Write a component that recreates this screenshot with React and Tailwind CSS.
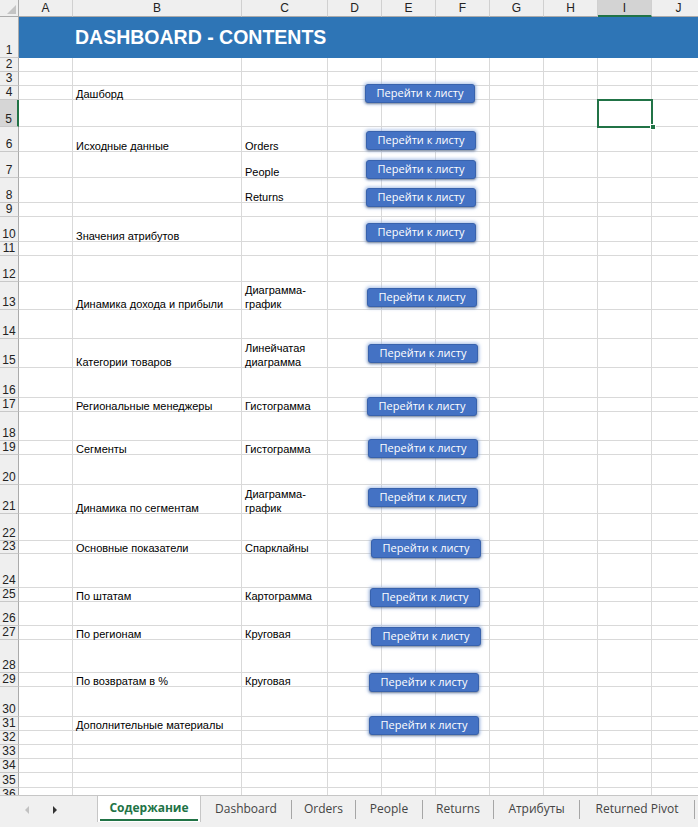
import React from "react";

const COLS = [
  ["A", 54],
  ["B", 169],
  ["C", 86],
  ["D", 54],
  ["E", 54],
  ["F", 54],
  ["G", 54],
  ["H", 54],
  ["I", 54],
  ["J", 54],
];

const ROWS = [
  { n: 2, h: 14 },
  { n: 3, h: 14 },
  { n: 4, h: 14, b: "Дашборд" },
  { n: 5, h: 27 },
  { n: 6, h: 25, b: "Исходные данные", c: "Orders" },
  { n: 7, h: 26, c: "People" },
  { n: 8, h: 25, c: "Returns" },
  { n: 9, h: 14 },
  { n: 10, h: 25, b: "Значения атрибутов" },
  { n: 11, h: 14 },
  { n: 12, h: 26 },
  { n: 13, h: 28, b: "Динамика дохода и прибыли", c: ["Диаграмма-", "график"] },
  { n: 14, h: 29 },
  { n: 15, h: 29, b: "Категории товаров", c: ["Линейчатая", "диаграмма"] },
  { n: 16, h: 30 },
  { n: 17, h: 14, b: "Региональные менеджеры", c: "Гистограмма" },
  { n: 18, h: 29 },
  { n: 19, h: 14, b: "Сегменты", c: "Гистограмма" },
  { n: 20, h: 30 },
  { n: 21, h: 29, b: "Динамика по сегментам", c: ["Диаграмма-", "график"] },
  { n: 22, h: 27 },
  { n: 23, h: 13, b: "Основные показатели", c: "Спарклайны" },
  { n: 24, h: 34 },
  { n: 25, h: 14, b: "По штатам", c: "Картограмма" },
  { n: 26, h: 24 },
  { n: 27, h: 14, b: "По регионам", c: "Круговая" },
  { n: 28, h: 33 },
  { n: 29, h: 14, b: "По возвратам в %", c: "Круговая" },
  { n: 30, h: 30 },
  { n: 31, h: 14, b: "Дополнительные материалы" },
  { n: 32, h: 14 },
  { n: 33, h: 14 },
  { n: 34, h: 14 },
  { n: 35, h: 15 },
  { n: 36, h: 14 },
];

// shapes floating over the sheet: [top, left]
const BUTTONS = [
  [84, 365],
  [131, 366],
  [160, 366],
  [188, 366],
  [223, 366],
  [288, 367],
  [344, 368],
  [397, 367],
  [439, 368],
  [488, 368],
  [539, 371],
  [588, 370],
  [627, 371],
  [673, 369],
  [716, 369],
];

const TABS = [
  ["Dashboard", 91],
  ["Orders", 64],
  ["People", 67],
  ["Returns", 71],
  ["Атрибуты", 86],
  ["Returned Pivot", 115],
];

function CellText({ value }) {
  if (!value) return null;
  const lines = Array.isArray(value) ? value : [value];
  return (
    <div className="flex flex-col leading-[14px] whitespace-nowrap translate-y-[2px]">
      {lines.map((l) => (
        <span key={l}>{l}</span>
      ))}
    </div>
  );
}

function Row({ row }) {
  const selected = row.n === 5;
  return (
    <div className="flex" style={{ height: row.h }}>
      <div
        className={`w-[19px] shrink-0 flex items-end justify-center border-b border-[#c8c8c8] text-[12px] leading-[13px] text-[#222] ${
          selected
            ? "bg-[#d6d6d6] border-r-2 border-r-[#217346]"
            : "bg-[#efefef] border-r border-r-[#ababab]"
        }`}
      >
        {row.n}
      </div>
      {COLS.map(([k, w]) => (
        <div
          key={k}
          className="shrink-0 flex items-end pl-[3px] border-r border-b border-[#d9d9d9] text-[11px] text-black"
          style={{ width: w }}
        >
          {k === "B" && <CellText value={row.b} />}
          {k === "C" && <CellText value={row.c} />}
        </div>
      ))}
    </div>
  );
}

function GoButton({ top, left }) {
  return (
    <div
      className="absolute w-[110px] h-[19px] rounded-[3px] bg-[#4472c4] border border-[#3862ad] flex items-center justify-center text-white text-[11px] font-['Open_Sans',sans-serif] shadow-[0_1px_2px_rgba(0,0,0,0.35),0_0_3px_2px_rgba(150,178,228,0.55)]"
      style={{ top, left }}
    >
      Перейти к листу
    </div>
  );
}

export default function App() {
  return (
    <div className="w-[698px] h-[827px] overflow-hidden bg-white font-['Liberation_Sans',Arial,sans-serif]">
      <div className="relative h-[795px] overflow-hidden">
        <div className="flex h-[17px]">
          <div className="w-[19px] shrink-0 bg-[#efefef] border-r border-b border-[#ababab] relative">
            <div className="absolute right-[2px] bottom-[2px] w-0 h-0 border-l-[9px] border-l-transparent border-b-[9px] border-b-[#c4c4c4]" />
          </div>
          {COLS.map(([k, w]) => (
            <div
              key={k}
              className={`shrink-0 flex items-center justify-center text-[12px] text-[#222] border-r border-[#d0d0d0] ${
                k === "I"
                  ? "bg-[#d3d3d3] border-b-2 border-b-[#217346]"
                  : "bg-[#efefef] border-b border-b-[#ababab]"
              }`}
              style={{ width: w }}
            >
              {k}
            </div>
          ))}
        </div>

        <div className="flex h-[41px]">
          <div className="w-[19px] shrink-0 bg-[#efefef] border-r border-[#ababab] border-b border-b-[#c8c8c8] flex items-end justify-center text-[12px] leading-[13px] text-[#222]">
            1
          </div>
          <div className="flex-1 bg-[#2e75b6] flex items-center pl-[56px] text-white text-[19.5px] font-bold whitespace-nowrap">
            DASHBOARD - CONTENTS
          </div>
        </div>

        {ROWS.map((r) => (
          <Row key={r.n} row={r} />
        ))}

        <div className="absolute left-[597px] top-[99px] w-[56px] h-[29px] border-2 border-[#217346]" />
        <div className="absolute left-[650px] top-[124px] w-[6px] h-[6px] bg-[#217346] border border-white" />

        {BUTTONS.map(([t, l]) => (
          <GoButton key={t} top={t} left={l} />
        ))}
      </div>

      <div className="h-[32px] bg-[#f0f0f0] border-t border-[#c6c6c6] flex font-['Open_Sans',sans-serif]">
        <div className="w-[97px] shrink-0 flex items-center pb-[4px]">
          <div className="ml-[25px] w-0 h-0 border-t-[4px] border-t-transparent border-b-[4px] border-b-transparent border-r-[4px] border-r-[#c2c2c2]" />
          <div className="ml-[24px] w-0 h-0 border-t-[4px] border-t-transparent border-b-[4px] border-b-transparent border-l-[4px] border-l-[#333]" />
        </div>
        <div className="w-[104px] shrink-0 h-[26px] bg-white border-x border-[#c6c6c6] flex flex-col">
          <div className="flex-1 flex items-center justify-center text-[12px] font-bold text-[#217346]">
            Содержание
          </div>
          <div className="h-[2px] bg-[#217346] mx-[2px] mb-[1px]" />
        </div>
        {TABS.map(([t, w]) => (
          <div
            key={t}
            className="shrink-0 h-[26px] flex items-center"
            style={{ width: w }}
          >
            <span className="flex-1 text-center text-[12px] text-[#444]">{t}</span>
            <span className="w-px h-[19px] bg-[#a6a6a6]" />
          </div>
        ))}
      </div>
    </div>
  );
}
